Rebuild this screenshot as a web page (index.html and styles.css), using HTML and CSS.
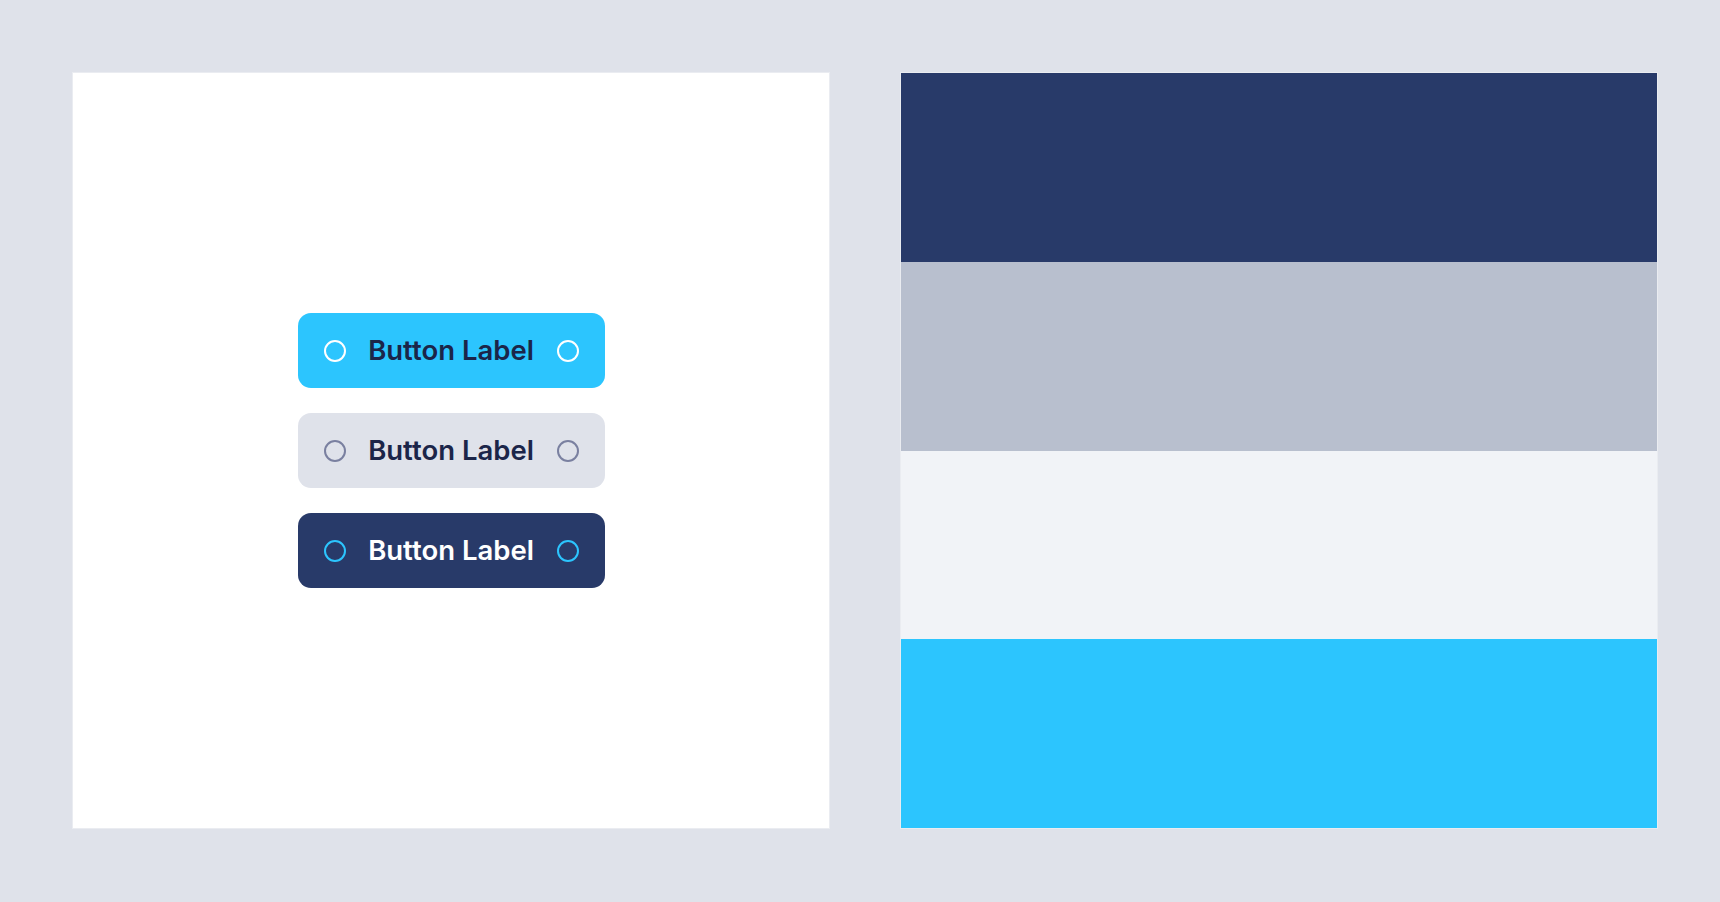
FILE: index.html
```html
<!DOCTYPE html>
<html>
<head>
<meta charset="utf-8">
<link rel="stylesheet" href="styles.css">
</head>
<body>
<div class="page">
  <div class="panel buttons-panel">
    <div class="stack">
      <div class="btn btn-primary">
        <span class="ring"></span>
        <span class="label">Button Label</span>
        <span class="ring"></span>
      </div>
      <div class="btn btn-secondary">
        <span class="ring"></span>
        <span class="label">Button Label</span>
        <span class="ring"></span>
      </div>
      <div class="btn btn-dark">
        <span class="ring"></span>
        <span class="label">Button Label</span>
        <span class="ring"></span>
      </div>
    </div>
  </div>
  <div class="panel swatches">
    <div class="swatch swatch-navy"></div>
    <div class="swatch swatch-gray"></div>
    <div class="swatch swatch-light"></div>
    <div class="swatch swatch-cyan"></div>
  </div>
</div>
</body>
</html>
```

FILE: styles.css
```css
html, body {
  margin: 0;
  padding: 0;
  background: #dfe2ea;
}
.page {
  display: flex;
  gap: 72px;
  padding: 73px 63px 74px 73px;
  height: 902px;
  box-sizing: border-box;
}
.panel {
  width: 756px;
  height: 755px;
  flex: none;
  box-shadow: 0 0 0 1px rgba(255, 255, 255, 0.35);
}
.buttons-panel {
  background: #ffffff;
  display: flex;
  align-items: center;
  justify-content: center;
}
.stack {
  display: flex;
  flex-direction: column;
  gap: 25px;
}
.btn {
  width: 307px;
  height: 75px;
  box-sizing: border-box;
  padding: 0 26px;
  border-radius: 13px;
  display: flex;
  align-items: center;
  justify-content: space-between;
  font-family: Inter, "Noto Sans", sans-serif;
  font-weight: 600;
  font-size: 27.5px;
}
.ring {
  width: 22px;
  height: 22px;
  box-sizing: border-box;
  border-radius: 50%;
  border: 2.5px solid currentColor;
  flex: none;
}
.label {
  line-height: 1;
}
.btn-primary {
  background: #2cc5fe;
  color: #1b2549;
}
.btn-primary .ring { color: #ffffff; }
.btn-secondary {
  background: #dfe2ea;
  color: #1b2549;
}
.btn-secondary .ring { color: #7a80a0; }
.btn-dark {
  background: #283a69;
  color: #ffffff;
}
.btn-dark .ring { color: #2cc5fe; }
.swatches {
  display: flex;
  flex-direction: column;
}
.swatch {
  flex: 1;
}
.swatch-navy { background: #283a69; }
.swatch-gray { background: #b8bfce; }
.swatch-light { background: #f1f3f7; }
.swatch-cyan { background: #2cc5fe; }
```
